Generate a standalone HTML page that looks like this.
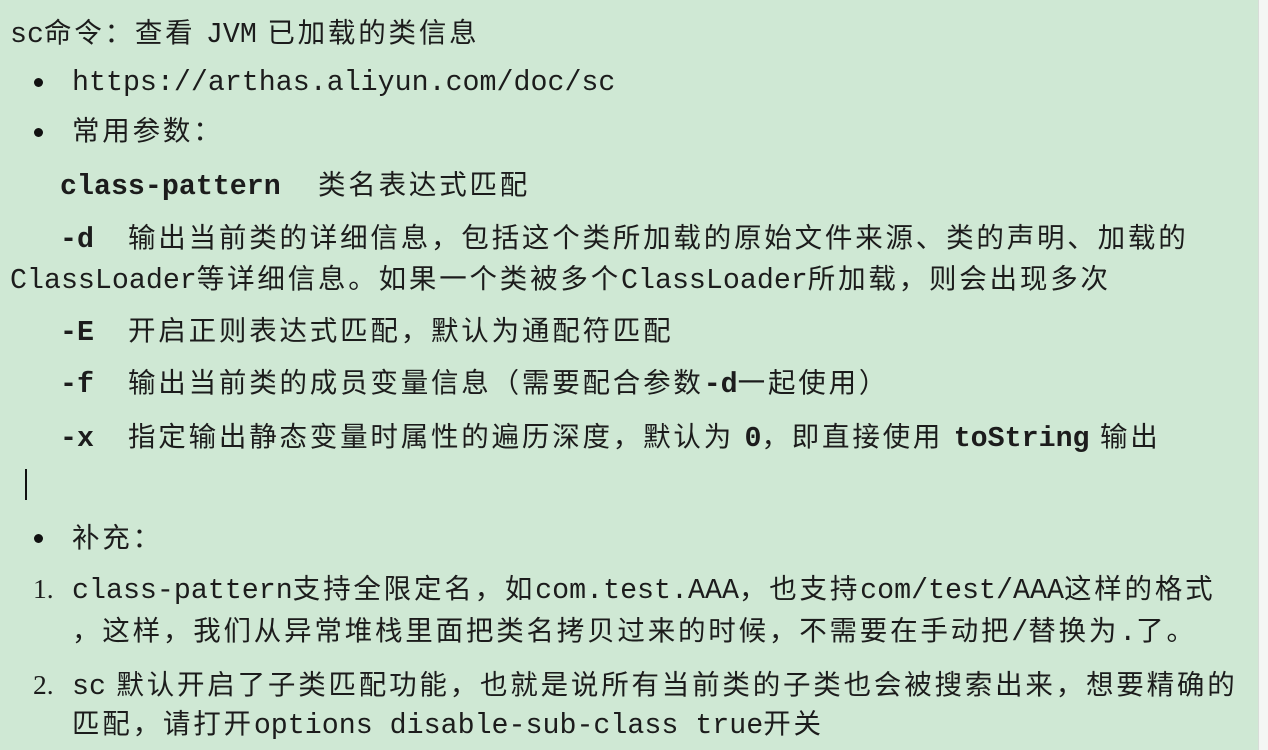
<!DOCTYPE html>
<html><head><meta charset="utf-8"><style>
html,body{margin:0;padding:0;}
body{width:1268px;height:750px;background:#cfe8d4;position:relative;overflow:hidden;color:#1c1c1c;font-family:"Liberation Sans","Noto Sans CJK SC",sans-serif;font-size:27.5px;letter-spacing:2.8px;}
.l{position:absolute;white-space:pre;line-height:30px;height:30px;}
.m{font-family:"Liberation Mono",monospace;font-size:28.3px;letter-spacing:0;}
.b{font-weight:bold;}
.dot{position:absolute;width:9px;height:9px;border-radius:50%;background:#111;}
.side{position:absolute;left:1258px;top:0;width:10px;height:750px;background:#f4f6f4;border-left:1px solid #d8dcd8;}
.n{font-family:"Liberation Serif",serif;letter-spacing:0;}
</style></head><body>
<div class="side"></div>
<div class="l" style="left:10px;top:18px"><span class="m">sc</span>命令：查看 <span class="m">JVM</span> 已加载的类信息</div>
<div class="dot" style="left:34px;top:78px"></div>
<div class="l" style="left:72px;top:66px"><span class="m">https://arthas.aliyun.com/doc/sc</span></div>
<div class="dot" style="left:34px;top:128px"></div>
<div class="l" style="left:72px;top:116px">常用参数：</div>
<div class="l" style="left:60px;top:170px"><span class="m b">class-pattern</span></div>
<div class="l" style="left:318px;top:170px">类名表达式匹配</div>
<div class="l" style="left:60px;top:223px"><span class="m b">-d</span></div>
<div class="l" style="left:128px;top:223px">输出当前类的详细信息，包括这个类所加载的原始文件来源、类的声明、加载的</div>
<div class="l" style="left:10px;top:264px"><span class="m">ClassLoader</span>等详细信息。如果一个类被多个<span class="m">ClassLoader</span>所加载，则会出现多次</div>
<div class="l" style="left:60px;top:316px"><span class="m b">-E</span></div>
<div class="l" style="left:128px;top:316px">开启正则表达式匹配，默认为通配符匹配</div>
<div class="l" style="left:60px;top:368px"><span class="m b">-f</span></div>
<div class="l" style="left:128px;top:368px">输出当前类的成员变量信息（需要配合参数<span class="m b">-d</span>一起使用）</div>
<div class="l" style="left:60px;top:422px"><span class="m b">-x</span></div>
<div class="l" style="left:128px;top:422px">指定输出静态变量时属性的遍历深度，默认为 <span class="m b">0</span>，即直接使用 <span class="m b">toString</span> 输出</div>
<div style="position:absolute;left:25px;top:469px;width:2px;height:31px;background:#111"></div>
<div class="dot" style="left:34px;top:534px"></div>
<div class="l" style="left:72px;top:523px">补充：</div>
<div class="l" style="left:33px;top:574px"><span class="n">1.</span></div>
<div class="l" style="left:72px;top:574px"><span class="m">class-pattern</span>支持全限定名，如<span class="m">com.test.AAA</span>，也支持<span class="m">com/test/AAA</span>这样的格式</div>
<div class="l" style="left:72px;top:616px">，这样，我们从异常堆栈里面把类名拷贝过来的时候，不需要在手动把<span class="m">/</span>替换为<span class="m">.</span>了。</div>
<div class="l" style="left:33px;top:670px"><span class="n">2.</span></div>
<div class="l" style="left:72px;top:670px"><span class="m">sc</span> 默认开启了子类匹配功能，也就是说所有当前类的子类也会被搜索出来，想要精确的</div>
<div class="l" style="left:72px;top:709px">匹配，请打开<span class="m">options disable-sub-class true</span>开关</div>
</body></html>
